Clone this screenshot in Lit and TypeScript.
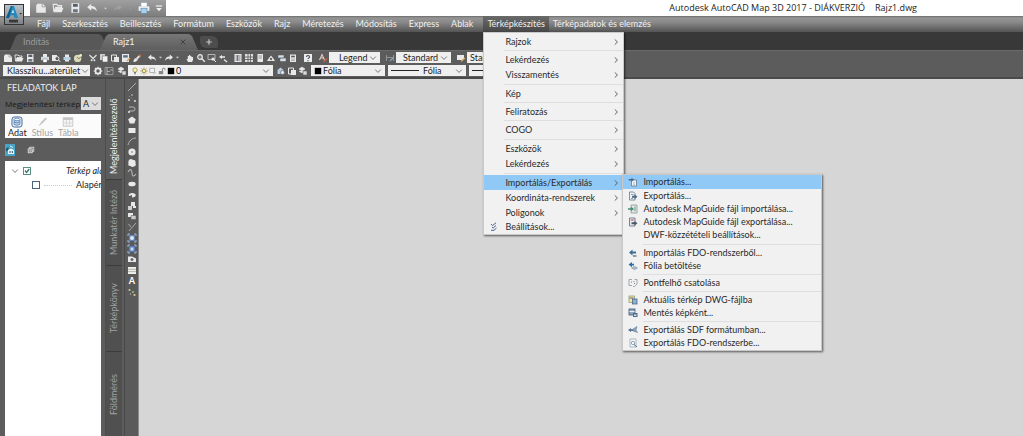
import { LitElement, html, svg, css } from "lit";
import { customElement, state } from "lit/decorators.js";

const W = "#e9e9e9";
const G = "#b4b4b4";

const glyphs: Record<string, unknown> = {
  new: svg`<path d="M2 1.5h4.5L9 4v5H1V3z" fill="${W}"/><path d="M6 1.5V4h3" fill="none" stroke="#8a8a8a" stroke-width=".6"/>`,
  open: svg`<path d="M1 2h3l1 1h3v1.500H3L1.500 8z" fill="none" stroke="${W}" stroke-width=".9"/><path d="M3 5h6.500L8 8.500H1.500z" fill="${W}"/>`,
  save: svg`<rect x="2" y="1" width="6.500" height="8" fill="${W}"/><rect x="3.300" y="1.600" width="4" height="2.400" fill="#55606e"/><rect x="3.300" y="6" width="4" height="2.600" fill="#6a7686"/>`,
  print: svg`<rect x="3" y="1" width="4" height="3" fill="${W}"/><rect x="1" y="3.800" width="8" height="3.400" fill="#d3dbe2"/><rect x="3" y="6" width="4" height="3.200" fill="#fff" stroke="#667" stroke-width=".4"/>`,
  printBlue: svg`<rect x="2.500" y=".5" width="5" height="3.500" fill="#fff" stroke="#8aa" stroke-width=".4"/><rect x=".5" y="3.500" width="9" height="4" rx=".6" fill="#e4ecf2"/><rect x="2.500" y="5.500" width="5" height="4" fill="#a8d0ec" stroke="#5b87a8" stroke-width=".5"/>`,
  preview: svg`<path d="M1 2h5v6H1z" fill="${W}"/><circle cx="6" cy="5.600" r="2" fill="#555" stroke="${W}"/><path d="M7.500 7L9.300 9" stroke="${W}"/>`,
  publish: svg`<rect x="1.500" y="4" width="7" height="3" fill="#b9d3e6"/><path d="M3 4V1.500h4V4M3 7v1.500h4V7" fill="${W}"/>`,
  globe: svg`<circle cx="4.600" cy="5.400" r="3.700" fill="#dcd8b6"/><path d="M4 4l2 2 3-4" fill="none" stroke="#777" stroke-width=".8"/><circle cx="7.600" cy="2.400" r="1.400" fill="#f2efd0"/>`,
  cut: svg`<path d="M1.500 2l4 4M8.500 2l-4 4" stroke="${W}" stroke-width="1.100"/><circle cx="3.600" cy="7.200" r="1" fill="${W}"/><circle cx="6.400" cy="7.200" r="1" fill="${W}"/>`,
  copy: svg`<rect x="1" y="1" width="5" height="6" fill="#cfcfcf"/><rect x="3.400" y="3" width="5.400" height="6" fill="#f2f2f2" stroke="#666" stroke-width=".5"/>`,
  paste: svg`<path d="M1.500 2h5v6h-5z" fill="none" stroke="${W}"/><rect x="4" y="4" width="5" height="5" fill="${W}"/>`,
  block: svg`<rect x="1" y="1" width="7" height="8" fill="${W}"/><rect x="2.200" y="2.200" width="4.600" height="2.400" fill="#5b6f88"/><path d="M6 8l3-3" stroke="#dca04c" stroke-width="1.400"/>`,
  match: svg`<path d="M1 8.500L3 5l3 2-3 2z" fill="${W}"/><path d="M4.500 6L8 2.500" stroke="#e8e0da" stroke-width="2"/><circle cx="8" cy="2.400" r="1.200" fill="#c4673d"/>`,
  undo: svg`<path d="M1 4.300L4.300 1.500v1.900c3.200 0 4.600 1.800 4.600 4.600C7.800 6 6.500 5.400 4.300 5.400v1.800z" fill="${W}"/>`,
  redo: svg`<path d="M9 4.300L5.700 1.500v1.900C2.500 3.400 1.100 5.200 1.100 8 2.200 6 3.500 5.400 5.700 5.400v1.800z" fill="${W}"/>`,
  redoOff: svg`<path d="M9 4.300L5.700 1.500v1.900C2.500 3.400 1.100 5.200 1.100 8 2.200 6 3.500 5.400 5.700 5.400v1.800z" fill="#a0a0a0"/>`,
  pan: svg`<path d="M3 9L1.500 6h1.300V3h1.200V2h1.200v1h1.200v1h1.600v3L7 9z" fill="${W}"/>`,
  zoom: svg`<circle cx="4" cy="4" r="2.300" fill="#777" stroke="${W}" stroke-width="1.200"/><path d="M5.800 5.800L8.800 8.800" stroke="${W}" stroke-width="1.400"/>`,
  zoomWin: svg`<path d="M1 1.500h7v5H1z" fill="none" stroke="${G}"/><circle cx="6" cy="6" r="1.600" fill="${W}"/><path d="M7 7l2 2" stroke="${W}"/>`,
  zoomPrev: svg`<path d="M1 4l3-2v1.300h3v1.500H4V6z" fill="${W}"/><path d="M6 6.500l3 2.500" stroke="${W}" stroke-width="1.300"/>`,
  props: svg`<rect x="1.500" y="1" width="7" height="8" fill="${W}"/><path d="M2.500 3h5M2.500 5h5M2.500 7h5M4.500 2v6" stroke="#59626c" stroke-width=".8"/>`,
  center: svg`<rect x="1" y="1" width="8" height="8" fill="#dedede"/><path d="M4 1v8M1 4h8M6.500 1v8M1 6.500h8" stroke="#595959" stroke-width=".8"/>`,
  sheet: svg`<rect x="2.500" y="1" width="5.500" height="8" fill="${W}"/><path d="M3.500 3h3.500M3.500 5h3.500" stroke="#777" stroke-width=".7"/>`,
  palette: svg`<path d="M1 8l2-3 2-2.500L7 5l2 3z" fill="${W}"/><circle cx="5" cy="6" r="1.200" fill="#667"/>`,
  markup: svg`<path d="M1 2h6v3H1zM3 5h6v3.500H3z" fill="#d4e0ea" stroke="#555" stroke-width=".5"/>`,
  calc: svg`<rect x="2" y="1.500" width="6" height="7.500" fill="${W}"/><rect x="3.200" y="2.700" width="3.600" height="1.600" fill="#556"/><path d="M3.500 6h3M3.500 7.500h3" stroke="#777" stroke-dasharray=".8 .5"/>`,
  help: svg`<rect x="1" y="1" width="8" height="8" fill="#ececec"/><path d="M3.500 4c0-2 3-2 3 0 0 1-1.500 1-1.500 2" fill="none" stroke="#3d4e66" stroke-width="1.100"/><circle cx="5" cy="7.700" r=".7" fill="#3d4e66"/>`,
  textStyle: svg`<path d="M1.500 7L4 1.500 6.500 7M2.500 5h3" fill="none" stroke="#e3c9c2" stroke-width="1.100"/><path d="M5.500 9L9 5.500" stroke="#c85e40" stroke-width="1.500"/>`,
  dimStyle: svg`<path d="M1.500 2v6M8.500 2v6M2 4.500h6" stroke="#999" stroke-width=".9"/><path d="M5 8l3-3" stroke="#8aa0b8" stroke-width="1.300"/>`,
  tableStyle: svg`<path d="M1 2h7v5H1z" fill="${W}"/><path d="M5 8.500L9 5" stroke="#d3a457" stroke-width="1.500"/>`,
  gear: svg`<circle cx="5" cy="5" r="2.600" fill="none" stroke="${W}" stroke-width="1.700"/><path d="M5 .7v1.600M5 7.700v1.600M.7 5h1.600M7.700 5h1.600M2 2l1 1M7 7l1 1M8 2L7 3M2 8l1-1" stroke="${W}" stroke-width="1.200"/>`,
  ws: svg`<path d="M1 1.500h8v7H1z" fill="none" stroke="#979797"/><path d="M3 1v8M6 4h3M3 5.500h3" stroke="#b0b0b0"/>`,
  layers: svg`<path d="M1 3l3-2 3 2-3 2zM1 5l3 2 3-2" fill="${W}" stroke="${W}" stroke-width=".6"/><rect x="5" y="5" width="4" height="4" fill="#d8d8d8" stroke="#555" stroke-width=".5"/>`,
  layersB: svg`<path d="M1.500 4l3-2.500 3 2.500v4h-6z" fill="#b9c9dc"/><circle cx="6.500" cy="6.500" r="2" fill="#e6e6e6" stroke="#5a6c82" stroke-width=".7"/>`,
  bulb: svg`<circle cx="5" cy="3.800" r="2.700" fill="#fbf3b6" stroke="#9a8d45" stroke-width="1"/><path d="M3.800 7h2.400M4 8.500h2" stroke="#555" stroke-width="1"/>`,
  sun: svg`<circle cx="5" cy="5" r="2.200" fill="#fff0a0" stroke="#978338" stroke-width="1"/><path d="M5 .5v1.700M5 7.800v1.700M.5 5h1.700M7.800 5h1.700M1.800 1.800l1.200 1.200M7 7l1.200 1.200M8.200 1.800L7 3M1.800 8.200l1.200-1.200" stroke="#978338" stroke-width="1"/>`,
  vp: svg`<rect x="1" y="1.500" width="6" height="5.500" fill="#f4f4f4" stroke="#999" stroke-width=".9"/><path d="M5 9l4-2.500" stroke="#bbb"/>`,
  lock: svg`<rect x="1" y="5" width="5.500" height="4" fill="#888"/><path d="M5.500 5V3a1.600 1.600 0 013.200 0v1" fill="none" stroke="#666"/>`,
  black: svg`<rect x="1" y="1" width="8" height="8" fill="#000"/>`,
  plus: svg`<path d="M5 1.500v7M1.500 5h7" stroke="#c6c6c6" stroke-width="1.500"/>`,
  close: svg`<path d="M2 2l6 6M8 2L2 8" stroke="#3f3f3f" stroke-width="1.200"/>`,
  line: svg`<path d="M1 9L9 1" stroke="${G}" stroke-width=".9"/>`,
  xline: svg`<path d="M2 3l6 5" stroke="#999" stroke-width=".7" stroke-dasharray="1.500 1.500"/><circle cx="2" cy="7" r=".9" fill="${W}"/><circle cx="8" cy="8" r=".9" fill="${W}"/><circle cx="5" cy="2" r=".7" fill="${W}"/>`,
  pline: svg`<path d="M2 3h4a2 2 0 010 4H2" fill="none" stroke="${G}"/><circle cx="2" cy="8" r="1" fill="${W}"/>`,
  polygon: svg`<path d="M5 1.500L8.800 4.300 7.300 8.500H2.700L1.200 4.300z" fill="${W}"/>`,
  rect: svg`<rect x="1.500" y="3" width="7" height="5" fill="${W}"/>`,
  arc: svg`<path d="M1 9C2 5 5 2 9 2" fill="none" stroke="${G}"/>`,
  circle: svg`<circle cx="5" cy="5" r="3.600" fill="${W}"/><circle cx="5" cy="5" r=".8" fill="#777"/>`,
  cloud: svg`<path d="M2 2q2-2 4 0 3-.5 2.500 3 1 3-1.500 3.500-2 1-3.500-.5Q.5 8 1.500 5.500.8 3.500 2 2z" fill="${W}"/>`,
  spline: svg`<path d="M1 4c3-5 4-1 4 1s1 5 4 1" fill="none" stroke="${G}" stroke-width="1.100"/>`,
  ellipse: svg`<ellipse cx="5" cy="5" rx="3.700" ry="2.300" fill="${W}"/>`,
  ellArc: svg`<path d="M2 6a3.500 2.300 0 113 1.500L5 5z" fill="${W}"/>`,
  insert: svg`<path d="M1 5h4v4H1z" fill="#cfcfcf"/><path d="M4 1h4v4H4zM6 5h3v2H6z" fill="${W}"/>`,
  mkblock: svg`<path d="M1 2h5v4H1z" fill="${W}"/><path d="M4 4.500h5v4H4z" fill="#c9c9c9" stroke="#555" stroke-width=".5"/>`,
  point: svg`<path d="M1.500 2l2.500 3M9 1L2 9" stroke="${G}" stroke-width=".9"/>`,
  hatch: svg`<path d="M1 3V1h2M7 1h2v2M9 7v2H7M3 9H1V7" fill="none" stroke="#9ab6e0"/><rect x="2.200" y="2.200" width="5.600" height="5.600" fill="#6c90cc"/><circle cx="5" cy="5" r="1.900" fill="#dfe9f7"/>`,
  gradient: svg`<path d="M1 3V1h2M7 1h2v2M9 7v2H7M3 9H1V7" fill="none" stroke="#9ab6e0"/><rect x="2.200" y="2.200" width="5.600" height="5.600" fill="#5b84c6"/><path d="M3.500 3.500h3v3h-3z" fill="#c5d7f2"/>`,
  region: svg`<path d="M1 2.500h4l4 2V8H1z" fill="${W}"/><circle cx="5" cy="5.500" r="1.500" fill="#667"/>`,
  table: svg`<rect x="1" y="2" width="8" height="7" fill="#f0f0ea"/><path d="M1 4.300h8M1 6.600h8" stroke="#888" stroke-width=".6"/>`,
  dots: svg`<circle cx="2.500" cy="3" r="1" fill="#d8cf8a"/><circle cx="6" cy="5" r="1" fill="#9ac28a"/><circle cx="7.500" cy="8" r="1.100" fill="#e2ca8c"/><circle cx="3.500" cy="7" r=".7" fill="#bbb"/>`,
  database: svg`<rect x=".8" y=".8" width="8.400" height="8.400" rx="2" fill="#e9f1fa" stroke="#3c6698" stroke-width=".8"/><path d="M2.500 3v4q2.500 1.600 5 0V3" fill="#b8d0ea"/><ellipse cx="5" cy="2.900" rx="2.500" ry="1" fill="#f4f9ff" stroke="#3c6698" stroke-width=".5"/><path d="M2.500 3v4q2.500 1.600 5 0V3M2.500 5q2.500 1.500 5 0" fill="none" stroke="#3c6698" stroke-width=".5"/>`,
  brush: svg`<path d="M2 8.500L4 5.500l1 1z" fill="#c4c4c4"/><path d="M4.500 6L8.500 1.800" stroke="#c4c4c4" stroke-width="1.500" fill="none"/>`,
  grid: svg`<rect x="1" y="1.500" width="8" height="7" fill="#f5f5f5" stroke="#c5c5c5" stroke-width=".7"/><rect x="1" y="1.500" width="8" height="1.800" fill="#c5c5c5"/><path d="M3.700 3v5.500M6.300 3v5.500M1 5.800h8" stroke="#cfcfcf" stroke-width=".6"/>`,
  mapLayer: svg`<path d="M1 3.500l2.500-1.500v3L1 6.500z" fill="#1f5674"/><path d="M3 5l3-1.500L9 5v4H3z" fill="#e8f5fb"/><path d="M4.500 6h1v2h-1zM6.800 6h1v2h-1z" fill="#1f5674"/><path d="M5 1l3 1.500" stroke="#d4eef8"/>`,
  group: svg`<rect x="3.500" y="1.500" width="5" height="5" fill="none" stroke="${W}"/><rect x="1.500" y="3.500" width="5" height="5" fill="#777" stroke="${W}"/><path d="M2 6h4M4 4v4" stroke="${W}" stroke-width=".6"/>`,
  check: svg`<path d="M2 2l1.500 1.500L7 .8M3 5l1.200 1L7 3.500M2 8.300h3L7.500 6" fill="none" stroke="#44668c" stroke-width="1"/>`,
  import: svg`<path d="M3.500 3h5v6h-5z" fill="#f2f5f8" stroke="#66788c" stroke-width=".8"/><path d="M.8 2h2.700V.8L6 2.800 3.500 4.800V3.500H.8z" fill="#4a6484"/><path d="M5 5.800h2M5 7.300h2" stroke="#8797a8" stroke-width=".6"/>`,
  export: svg`<path d="M1.500 1h4L7 2.500V9H1.500z" fill="#f0f3f6" stroke="#66788c" stroke-width=".8"/><path d="M3 3.500h2.500M3 7.500h2" stroke="#66788c" stroke-width=".7"/><path d="M4 4.800h2.500V3.300L9.500 5.800 6.500 8.200V6.800H4z" fill="#4c6c88"/>`,
  mgIn: svg`<path d="M3 1h6v8H3z" fill="#dfe9e4" stroke="#8a9a95" stroke-width=".8"/><path d="M0 4.200h3V2.800L6 5 3 7.200V5.800H0z" fill="#3f8f6a"/><path d="M7 2.500v5" stroke="#7c8f9a"/>`,
  mgOut: svg`<path d="M1.500 1h5.500v8H1.500z" fill="#ececf0" stroke="#6c7480" stroke-width=".9"/><path d="M2.800 3h3" stroke="#b24a4a" stroke-width="1"/><path d="M3.500 5.200h3V4l3 2.300-3 2.300V7.300h-3z" fill="#46586c"/>`,
  fdoIn: svg`<path d="M1 4.500L4.500 1.500v2H8v2H4.500v2z" fill="#3b6f96"/><path d="M5 7h3.500v2H5z" fill="#8c9aa6"/>`,
  layerIn: svg`<path d="M.5 3.500L4 1v1.700h2v1.800H4v1.700z" fill="#2f6ea3"/><path d="M3.500 7l3-1.700L9.500 7l-3 1.700z" fill="#a9bccc" stroke="#6e8498" stroke-width=".5"/>`,
  cloudPts: svg`<path d="M4 1.500H1V7.500h3M6.500 1.500H9v4.500L6.500 8.500H5" fill="none" stroke="#8b95a0" stroke-width=".8"/><path d="M3 4h1M5.500 3.500h1M6 5.500h1" stroke="#5e6e80" stroke-width=".8"/>`,
  dwg: svg`<rect x="1" y="1" width="5.500" height="6.500" fill="#f4e7a8" stroke="#8a8d60" stroke-width=".7"/><rect x="4.500" y="4" width="4.500" height="5" fill="#8db1d4" stroke="#3e5a7a" stroke-width=".7"/><path d="M1.500 3h4" stroke="#4e6a88"/>`,
  image: svg`<rect x="1" y="1" width="6" height="6" fill="#8fa7c0" stroke="#42566e" stroke-width=".8"/><path d="M1.500 3.500h5" stroke="#e8edf2"/><rect x="5" y="5" width="4.500" height="4" fill="#4e6a8c"/><rect x="6" y="6.500" width="2.400" height="1.400" fill="#e8edf2"/>`,
  sdf: svg`<path d="M0 5l3-2v1.200h2v1.800H3V7z" fill="#56728e"/><path d="M5 4l4-2.500L8 5l1.500 2.500L5 6z" fill="#8aa5bd" stroke="#56728e" stroke-width=".5"/>`,
  fdoOut: svg`<path d="M2 1h6v8H2z" fill="#f5f7f9" stroke="#8f9dab" stroke-width=".7"/><circle cx="5" cy="5" r="1.700" fill="none" stroke="#7991aa" stroke-width=".8"/><path d="M6 6.500L9 9" stroke="#56728e"/>`,
  chevR: svg`<path d="M3.500 1.800L6.800 5 3.500 8.200" fill="none" stroke="#5a5a5a" stroke-width="1.200"/>`,
  chevD: svg`<path d="M1.500 3.200L5 6.800l3.500-3.600" fill="none" stroke="#666" stroke-width="1.100"/>`,
  drop: svg`<path d="M2 3.500h6L5 7z" fill="#cfcfcf"/>`,
  dropOff: svg`<path d="M2 3.500h6L5 7z" fill="#999"/>`,
  custom: svg`<path d="M1 2.500h8" stroke="#f2f2f2" stroke-width="1.500"/><path d="M1.500 5h7L5 9z" fill="#f2f2f2"/>`,
};

const icon = (name: string, size = "") =>
  html`<svg class="icon ${size}" viewBox="0 0 10 10" aria-hidden="true">${glyphs[name]}</svg>`;

const tools = (names: string[]) =>
  html`<div class="group">
    ${names.map((n) =>
      n === "drop"
        ? html`<svg class="icon tiny" viewBox="0 0 10 10" aria-hidden="true">${glyphs.drop}</svg>`
        : html`<button class="tool" aria-label=${n}>${icon(n)}</button>`
    )}
  </div>`;

const combo = (cls: string, label: string, value: string, lead: unknown = "") =>
  html`<label class="combo ${cls}">
    ${lead}
    <select aria-label=${label}><option>${value}</option></select>
    ${icon("chevD", "small")}
  </label>`;

interface Entry {
  label?: string;
  icon?: string;
  more?: boolean;
  active?: boolean;
  tall?: boolean;
  sep?: "thin" | "wide";
}

const mainMenu: Entry[] = [
  { label: "Rajzok", more: true },
  { sep: "thin" },
  { label: "Lekérdezés", more: true },
  { label: "Visszamentés", more: true },
  { sep: "wide" },
  { label: "Kép", more: true },
  { sep: "thin" },
  { label: "Feliratozás", more: true },
  { sep: "thin" },
  { label: "COGO", more: true },
  { sep: "wide" },
  { label: "Eszközök", more: true },
  { label: "Lekérdezés", more: true },
  { sep: "wide" },
  { label: "Importálás/Exportálás", more: true, active: true },
  { label: "Koordináta-rendszerek", more: true },
  { label: "Poligonok", more: true },
  { label: "Beállítások...", icon: "check", tall: true },
];

const subMenu: Entry[] = [
  { label: "Importálás...", icon: "import", active: true, tall: true },
  { label: "Exportálás...", icon: "export" },
  { label: "Autodesk MapGuide fájl importálása...", icon: "mgIn" },
  { label: "Autodesk MapGuide fájl exportálása...", icon: "mgOut" },
  { label: "DWF-közzétételi beállítások...", tall: true },
  { sep: "wide" },
  { label: "Importálás FDO-rendszerből...", icon: "fdoIn" },
  { label: "Fólia betöltése", icon: "layerIn" },
  { sep: "wide" },
  { label: "Pontfelhő csatolása", icon: "cloudPts" },
  { sep: "wide" },
  { label: "Aktuális térkép DWG-fájlba", icon: "dwg" },
  { label: "Mentés képként...", icon: "image" },
  { sep: "wide" },
  { label: "Exportálás SDF formátumban...", icon: "sdf" },
  { label: "Exportálás FDO-rendszerbe...", icon: "fdoOut" },
];

const menuBar = [
  "Fájl", "Szerkesztés", "Beillesztés", "Formátum", "Eszközök", "Rajz",
  "Méretezés", "Módosítás", "Express", "Ablak",
];

const drawTools = [
  ["line", "xline", "pline", "polygon"],
  ["rect", "arc", "circle", "cloud"],
  ["spline", "ellipse", "ellArc", "insert"],
  ["mkblock", "point", "hatch", "gradient"],
  ["region", "table", "letter", "dots"],
];

@customElement("app-root")
export class AppRoot extends LitElement {
  @state() private sideTab = 0;

  static styles = css`
    :host {
      display: flex;
      flex-direction: column;
      height: 100vh;
      overflow: hidden;
      position: relative;
      font-family: Lato, "Open Sans", sans-serif;
      font-size: 9px;
      line-height: 12px;
      color: #222;
      background: #fff;
    }
    * { box-sizing: border-box; }
    button, select, input {
      font: inherit;
      color: inherit;
      margin: 0;
      padding: 0;
      border: 0;
      background: none;
    }
    button { display: block; text-align: left; white-space: nowrap; }
    .icon { display: block; width: 10px; height: 10px; flex: none; }
    .icon.small { width: 8px; height: 8px; }
    .icon.tiny { width: 5px; height: 5px; }
    .icon.large { width: 12px; height: 12px; }

    .logo {
      position: absolute;
      left: 4px;
      top: 4px;
      width: 20px;
      height: 21px;
      z-index: 2;
    }
    .logo svg { display: block; width: 20px; height: 21px; }

    .title { display: flex; align-items: center; height: 16px; padding-left: 30px; padding-right: 106px; }
    .quick {
      display: flex;
      align-items: center;
      gap: 5px;
      height: 16px;
      padding: 0 3px 0 5px;
      background: linear-gradient(#a0a0a0, #7e7e7e);
    }
    .title h1 {
      display: flex;
      gap: 10px;
      margin: 0 0 0 auto;
      font-family: "Open Sans", "Noto Sans", sans-serif;
      font-size: 9px;
      font-weight: 400;
      white-space: nowrap;
    }

    .menubar {
      display: flex;
      height: 16px;
      flex: none;
      padding-left: 31px;
      color: #f0f0f0;
      background: linear-gradient(#6c6c6c 0, #959595 2px, #8a8a8a 6px, #545454 100%);
    }
    .menubar > button { padding: 0 6px; }
    .menubar .near { height: 16px; padding: 0 4px; }
    .menubar .near.open { background: linear-gradient(#6a6a6a, #484848); }
    .anchor { position: relative; margin-left: 4px; }

    .menu {
      position: absolute;
      z-index: 5;
      background: #f1f1f1;
      border: 1px solid #c9c9c9;
      box-shadow: 1px 1px 2px #0009;
      color: #2a2a2a;
    }
    .menu.main { top: 16px; left: 0; width: 141px; padding: 1px 0 0; }
    .menu.sub { top: 158px; left: 139px; width: 200px; padding: 0 0 1px; }
    .menu button {
      display: flex;
      align-items: center;
      width: 100%;
      height: 15px;
      padding: 0 3px 0 5px;
    }
    .menu button.tall { height: 14px; }
    .menu.sub button { height: 13px; }
    .menu.sub button.tall { height: 14px; }
    .menu button.active { background: #90c8f6; }
    .menu .slot { width: 16px; flex: none; }
    .menu.sub .slot { width: 15px; }
    .menu .name { flex: 1; }
    .sep { display: flex; align-items: center; height: 3px; padding-left: 20px; }
    .sep.wide { height: 4px; }
    .sep::before { content: ""; flex: 1; height: 1px; background: #dedede; }

    .files {
      display: flex;
      align-items: flex-end;
      height: 18px;
      flex: none;
      padding-left: 10px;
      background: #383838;
    }
    .file {
      display: flex;
      align-items: center;
      justify-content: space-between;
      width: 98px;
      height: 16px;
      padding: 0 11px 0 13px;
      color: #9b9b9b;
      background: #585858;
      clip-path: polygon(0 100%, 6px 12%, 9px 0, calc(100% - 9px) 0, calc(100% - 6px) 12%, 100% 100%);
    }
    .file.current { margin-left: -8px; color: #f0f0f0; background: linear-gradient(#777, #5e5e5e); }
    .add {
      display: flex;
      align-items: center;
      justify-content: center;
      width: 18px;
      height: 12px;
      margin: 0 0 2px 2px;
      border-radius: 2px 6px 2px 6px;
      background: #4d4d4d;
    }

    .bars { flex: none; background: #5c5c5c; border-top: 1px solid #6a6a6a; border-bottom: 2px solid #4a4a4a; }
    .bar { display: flex; align-items: center; gap: 5px; height: 13px; padding-left: 3px; }
    .bar.near { gap: 3px; }
    .group { display: flex; align-items: center; gap: 1px; }
    .combo {
      display: flex;
      align-items: center;
      flex: none;
      height: 11px;
      padding: 0 3px;
      gap: 1px;
      background: #efefef;
      color: #1d1d1d;
    }
    .combo select { appearance: none; flex: 1; width: 0; min-width: 0; height: 11px; line-height: 11px; outline: none; }
    .combo.ws { width: 87px; padding: 0 1px 0 4px; gap: 0; }
    .combo.layer { width: 145px; }
    .combo.color { width: 74px; }
    .combo.ltype { width: 78px; }
    .combo.legend { width: 51px; padding-left: 10px; }
    .combo.std { width: 55px; padding-left: 7px; }
    .combo.tbl { width: 55px; }
    .stroke { height: 1px; width: 28px; margin-right: 3px; background: #222; flex: none; }

    .body { display: flex; flex: 1; min-height: 0; }
    .pane { width: 105px; flex: none; display: flex; flex-direction: column; padding: 0 4px 0 5px; background: #5c5c5c; }
    .pane h2 { margin: 0; padding: 3px 2px 2px; font-size: 9px; font-weight: 400; color: #ececec; }
    .source { display: flex; align-items: center; height: 15px; color: #161616; white-space: nowrap; }
    .source span { flex: 1; min-width: 0; font-family: "Open Sans", sans-serif; font-size: 8px; }
    .combo.pick { width: 20px; height: 13px; padding: 0 2px; gap: 0; background: #dcdcdc; }
    .modes { display: flex; gap: 5px; height: 24px; flex: none; margin-top: 3px; padding: 2px 3px 0; background: #fbfbfb; color: #a4a4a4; }
    .modes button { display: flex; flex-direction: column; align-items: center; line-height: 10px; height: 22px; }
    .modes .on { color: #222; }
    .views { display: flex; align-items: center; gap: 12px; height: 23px; flex: none; }
    .views .on { background: #4aa5c8; padding: 1px 0; }
    .tree { flex: 1; padding-top: 3px; background: #fff; overflow: hidden; }
    .node { display: flex; align-items: center; gap: 4px; height: 14px; padding-left: 6px; white-space: nowrap; }
    .node.child { padding-left: 27px; }
    .node input {
      appearance: none;
      display: grid;
      width: 8px;
      height: 8px;
      flex: none;
      border: 1px solid #49637a;
      background: #fff;
    }
    .node input:checked { border-color: #5c8f84; }
    .node input:checked::before {
      content: "";
      background: #2e6f5e;
      clip-path: polygon(10% 50%, 25% 35%, 42% 58%, 78% 10%, 95% 25%, 42% 90%);
    }
    .node em { padding-left: 31px; }
    .dots { width: 28px; border-top: 1px dotted #ccc; flex: none; }

    .side { display: flex; flex-direction: column; width: 19px; flex: none; padding: 15px 2px 0 0; background: #5c5c5c; overflow: hidden; border-left: 1px solid #4c4c4c; }
    .side button {
      flex: none;
      height: 86px;
      writing-mode: vertical-rl;
      transform: rotate(180deg);
      text-align: center;
      color: #a2a2a2;
      background: #505050;
      border-top: 1px solid #3c3c3c;
      line-height: 16px;
    }
    .side button.on { color: #efefef; background: #5c5c5c; }
    .draw { width: 15px; flex: none; padding: 3px 0 0 2px; background: #5a5a5a; border-right: 1px solid #8a8a8a; border-left: 1px solid #484848; }
    .column { display: flex; flex-direction: column; gap: 1px; }
    .letter { height: 10px; width: 10px; color: #fff; font-weight: 700; line-height: 10px; text-align: center; }
    .canvas { flex: 1; background: #d6d6d6; }
  `;

  private entries(list: Entry[]) {
    return list.map((e) =>
      e.sep
        ? html`<div class="sep ${e.sep}" role="separator"></div>`
        : html`<button role="menuitem" class="${e.active ? "active" : ""} ${e.tall ? "tall" : ""}">
            <span class="slot">${e.icon ? icon(e.icon, "") : ""}</span>
            <span class="name">${e.label}</span>
            ${e.more ? icon("chevR", "small") : ""}
          </button>`
    );
  }

  render() {
    return html`
      <button class="logo" aria-label="Autodesk">
        <svg viewBox="0 0 20 21">
          <defs>
            <linearGradient id="bg" x1="0" y1="0" x2="0" y2="1">
              <stop offset="0" stop-color="#b9c2c8" /><stop offset="1" stop-color="#7c8286" />
            </linearGradient>
          </defs>
          <rect x=".5" y=".5" width="19" height="20" fill="url(#bg)" stroke="#333" />
          <path d="M2 14L7 2h3L14 14h-3.500l-.8-2.800H6.800L5 14z" fill="#2489bd" />
          <path d="M2 14L7 2h1.300L5 14z" fill="#0f5f8d" />
          <path d="M7.500 9L9 5.300l1.200 3.700z" fill="#c9e4f0" />
          <path d="M15.500 9h2.500l-1.250 1.500z" fill="#222" />
          <path d="M5.500 18.500v-2.500h2v2.500M8.500 18.500v-2.500h2v2.500M11.500 18.500v-2.500h2v2.500" stroke="#222" fill="#444" stroke-width=".7" />
        </svg>
      </button>

      <header class="title">
        <div class="quick">
          <button aria-label="Új">${icon("new", "large")}</button>
          <button aria-label="Megnyitás">${icon("open", "large")}</button>
          <button aria-label="Mentés">${icon("save", "large")}</button>
          <button aria-label="Vissza">${icon("undo", "large")}</button>
          ${icon("drop", "tiny")}
          <button aria-label="Újra">${icon("redoOff", "")}</button>
          ${icon("dropOff", "tiny")}
          <button aria-label="Nyomtatás">${icon("printBlue", "large")}</button>
          <button aria-label="Testreszabás">${icon("custom", "small")}</button>
        </div>
        <h1><span>Autodesk AutoCAD Map 3D 2017 - DIÁKVERZIÓ</span><span>Rajz1.dwg</span></h1>
      </header>

      <nav class="menubar">
        ${menuBar.map((m) => html`<button>${m}</button>`)}
        <div class="anchor">
          <button class="near open" aria-expanded="true">Térképkészítés</button>
          <div class="menu main" role="menu">${this.entries(mainMenu)}</div>
          <div class="menu sub" role="menu">${this.entries(subMenu)}</div>
        </div>
        <button class="near">Térképadatok és elemzés</button>
      </nav>

      <div class="files">
        <button class="file">Indítás</button>
        <button class="file current">Rajz1 ${icon("close", "small")}</button>
        <button class="add" aria-label="Új lap">${icon("plus", "small")}</button>
      </div>

      <div class="bars">
        <div class="bar">
          ${tools(["new", "open", "save"])}
          ${tools(["print", "preview", "publish", "globe"])}
          ${tools(["cut", "copy", "paste", "block", "match"])}
          ${tools(["undo", "drop", "redo", "drop"])}
          ${tools(["pan", "zoom", "zoomWin", "zoomPrev"])}
          ${tools(["props", "center", "sheet", "palette", "markup", "calc"])}
          ${tools(["help"])}
          <div class="group">${icon("textStyle")}${combo("legend", "Szövegstílus", "Legend")}</div>
          <div class="group">${icon("dimStyle")}${combo("std", "Méretstílus", "Standard")}</div>
          <div class="group">${icon("tableStyle")}${combo("tbl", "Táblázatstílus", "Standard")}</div>
        </div>
        <div class="bar near">
          ${combo("ws", "Munkaterület", "Klassziku...aterület")}
          ${tools(["gear", "ws"])}
          <div class="group">
            ${icon("layers")}
            ${combo("layer", "Fólia", "0", html`${["bulb", "sun", "vp", "lock", "black"].map((n) => icon(n, "small"))}`)}
          </div>
          ${tools(["layersB", "paste", "layers"])}
          ${combo("color", "Szín", "Fólia", icon("black", "small"))}
          ${combo("ltype", "Vonaltípus", "Fólia", html`<span class="stroke"></span>`)}
          ${combo("ltype", "Vonalvastagság", "Fólia", html`<span class="stroke"></span>`)}
        </div>
      </div>

      <div class="body">
        <aside class="pane">
          <h2>FELADATOK LAP</h2>
          <div class="source">
            <span>Megjelenítési térkép</span>
            ${combo("pick", "Megjelenítési térkép", "A")}
          </div>
          <div class="modes">
            <button class="on">${icon("database", "large")}Adat</button>
            <button>${icon("brush", "large")}Stílus</button>
            <button>${icon("grid", "large")}Tábla</button>
          </div>
          <div class="views">
            <button class="on" aria-label="Sorrend">${icon("mapLayer")}</button>
            <button aria-label="Csoportok">${icon("group", "small")}</button>
          </div>
          <div class="tree">
            <label class="node">${icon("chevD", "small")}<input type="checkbox" checked /><em>Térkép alap</em></label>
            <label class="node child"><input type="checkbox" /><span class="dots"></span>Alapértelmezett</label>
          </div>
        </aside>
        <div class="side">
          ${["Megjelenítéskezelő", "Munkatér Intéző", "Térképkönyv", "Földmérés"].map(
            (t, i) =>
              html`<button class=${i === this.sideTab ? "on" : ""} @click=${() => (this.sideTab = i)}>${t}</button>`
          )}
        </div>
        <div class="draw">
          ${drawTools.map(
            (g) => html`<div class="column">
              ${g.map((n) =>
                n === "letter"
                  ? html`<button class="letter">A</button>`
                  : html`<button aria-label=${n}>${icon(n)}</button>`
              )}
            </div>`
          )}
        </div>
        <main class="canvas"></main>
      </div>
    `;
  }
}
